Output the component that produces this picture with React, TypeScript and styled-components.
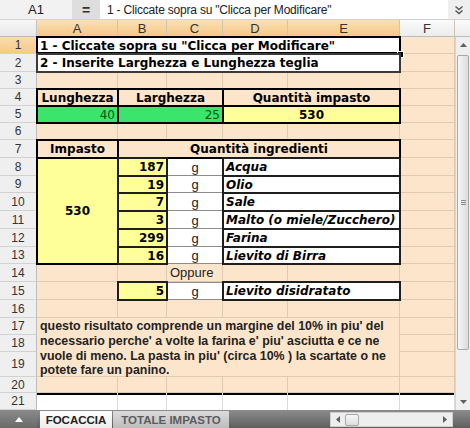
import React from 'react';
import styled, { createGlobalStyle, css } from 'styled-components';

const GlobalStyle = createGlobalStyle`
  html, body { margin: 0; padding: 0; background: #ffffff; overflow: hidden; }
  body { font-family: "Liberation Sans", Arial, sans-serif; }
`;

const PEACH = '#fce5cb';
const GRID = '#decbb4';
const GREEN = '#3be46a';
const YELLOW = '#ffff99';

const COLS = [37, 81, 49, 56, 65, 112, 55, 15];
// index 0 = header row, then sheet rows 1..21
const ROWS = [17, 17, 18, 17, 17, 17, 17, 18, 18, 17, 18, 18, 18, 17, 18, 18, 18, 17, 17, 25, 16, 17];

type Variant =
  | 'plain'
  | 'title'
  | 'subtitle'
  | 'head'
  | 'input'
  | 'result'
  | 'qty'
  | 'unit'
  | 'item'
  | 'note'
  | 'oppure'
  | 'blank';

const boxed = (color = '#000') => css`
  position: relative;
  z-index: 1;
  box-shadow: 0 0 0 1px ${color}, inset 0 0 0 1px ${color};
`;

const gridLines = css`
  border-right: 1px solid ${GRID};
  border-bottom: 1px solid ${GRID};
`;

const variants: Record<Variant, ReturnType<typeof css>> = {
  plain: css`
    background: ${PEACH};
    ${gridLines}
  `,
  title: css`
    background: #fff;
    font-weight: bold;
    ${boxed('#000')}
    box-shadow: 0 0 0 1px #000, inset 0 0 0 1px #000, inset 0 -1px 0 1px #000;
  `,
  subtitle: css`
    background: #fff;
    font-weight: bold;
    ${boxed('#3a3a3a')}
  `,
  head: css`
    background: ${PEACH};
    font-weight: bold;
    justify-content: center;
    ${boxed()}
  `,
  input: css`
    background: ${GREEN};
    justify-content: flex-end;
    color: #0f560f;
    ${boxed()}
  `,
  result: css`
    background: ${YELLOW};
    font-weight: bold;
    justify-content: center;
    ${boxed()}
  `,
  qty: css`
    background: ${YELLOW};
    font-weight: bold;
    justify-content: flex-end;
    ${boxed('#1e1e1e')}
  `,
  unit: css`
    background: #fff;
    justify-content: center;
    font-family: "Liberation Sans", Arial, sans-serif;
    font-size: 13px;
    color: #222;
    box-shadow: inset 0 -1px 0 #8c8c8c;
  `,
  item: css`
    background: #fff;
    font-weight: bold;
    font-style: italic;
    ${boxed('#1e1e1e')}
  `,
  note: css`
    background: ${PEACH};
    ${gridLines}
    font-family: "Liberation Sans", Arial, sans-serif;
    font-weight: bold;
    font-size: 12.4px;
    line-height: 14.8px;
    color: #222;
    align-items: flex-start;
    padding-top: 1px;
  `,
  oppure: css`
    background: ${PEACH};
    ${gridLines}
    font-family: "Liberation Sans", Arial, sans-serif;
    font-size: 13px;
    color: #222;
  `,
  blank: css`
    background: #fff;
    border-right: 1px solid #dadada;
    box-shadow: inset 0 2px 0 #000;
  `,
};

const Frame = styled.div`
  width: 470px;
  height: 428px;
  display: flex;
  flex-direction: column;
  overflow: hidden;
`;

const FormulaBar = styled.div`
  display: flex;
  height: 20px;
  box-sizing: border-box;
  border-bottom: 1px solid #d2d2d2;
  background: #f2f2f2;
`;

const NameBox = styled.div`
  width: 72px;
  display: flex;
  align-items: center;
  justify-content: center;
  font-size: 13px;
  color: #222;
`;

const EqualsButton = styled.div`
  width: 28px;
  display: flex;
  align-items: center;
  justify-content: center;
  background: #dedede;
  font-weight: bold;
  font-size: 14px;
  color: #333;
`;

const FormulaInput = styled.div`
  flex: 1;
  background: #fff;
  display: flex;
  align-items: center;
  padding-left: 7px;
  font-size: 12px;
  letter-spacing: -0.2px;
  color: #222;
  white-space: nowrap;
  overflow: hidden;
`;

const ExpandButton = styled.div`
  width: 22px;
  display: flex;
  align-items: center;
  justify-content: center;
  background: #efefef;
`;

const Sheet = styled.div`
  display: grid;
  grid-template-columns: ${COLS.map((c) => `${c}px`).join(' ')};
  grid-template-rows: ${ROWS.map((r) => `${r}px`).join(' ')};
  height: 390px;
`;

const Corner = styled.div`
  grid-row: 1;
  grid-column: 1;
  background: linear-gradient(#f7f7f7, #e8e8e8);
  border-right: 1px solid #c4c4c4;
  border-bottom: 1px solid #bcbcbc;
  box-sizing: border-box;
`;

const ColHead = styled.div<{ $c: number; $sel?: boolean; $edge?: boolean }>`
  grid-row: 1;
  grid-column: ${(p) => p.$c};
  display: flex;
  align-items: center;
  justify-content: center;
  box-sizing: border-box;
  font-size: 13px;
  color: #333;
  border-right: ${(p) => (p.$edge ? 'none' : '1px solid #d0c4b4')};
  border-bottom: 1px solid #bcbcbc;
  background: ${(p) =>
    p.$sel ? 'linear-gradient(#fbe0b6, #f5c886)' : 'linear-gradient(#fbfbfb, #ececec)'};
`;

const RowHead = styled.div<{ $r: number; $sel?: boolean }>`
  grid-row: ${(p) => p.$r};
  grid-column: 1;
  display: flex;
  align-items: center;
  justify-content: center;
  box-sizing: border-box;
  font-size: 12px;
  color: #333;
  border-right: 1px solid #bcbcbc;
  border-bottom: 1px solid #d2d2d2;
  background: ${(p) => (p.$sel ? 'linear-gradient(#fbdcae, #f6c98a)' : '#efefef')};
`;

const Cell = styled.div<{
  $r: number;
  $c: number;
  $rs?: number;
  $cs?: number;
  $v: Variant;
  $top?: boolean;
}>`
  grid-row: ${(p) => p.$r} / span ${(p) => p.$rs ?? 1};
  grid-column: ${(p) => p.$c} / span ${(p) => p.$cs ?? 1};
  box-sizing: border-box;
  display: flex;
  align-items: center;
  min-width: 0;
  white-space: nowrap;
  padding: 0 3px;
  font-family: "DejaVu Sans", Verdana, sans-serif;
  font-size: 12px;
  color: #000;
  ${(p) => variants[p.$v]}
  ${(p) =>
    p.$top &&
    css`
      box-shadow: inset 0 -1px 0 #8c8c8c, inset 0 1px 0 #8c8c8c;
    `}
`;

const Handle = styled.span`
  position: absolute;
  right: -4px;
  bottom: -4px;
  width: 5px;
  height: 5px;
  background: #000;
  border: 1px solid #fff;
`;

const VScroll = styled.div`
  grid-row: 2 / span 21;
  grid-column: 8;
  display: flex;
  flex-direction: column;
  background: #efefef;
  border-left: 1px solid #d4d4d4;
  box-sizing: border-box;
`;

const ArrowBox = styled.div`
  height: 16px;
  display: flex;
  align-items: center;
  justify-content: center;
`;

const Track = styled.div`
  flex: 1;
  display: flex;
  flex-direction: column;
`;

const VThumb = styled.div`
  margin: 2px 1px 0 1px;
  height: 295px;
  box-sizing: border-box;
  border: 1px solid #a8a8a8;
  border-radius: 2px;
  background: linear-gradient(to right, #f6f6f6, #dcdcdc);
  display: flex;
  align-items: center;
  justify-content: center;
`;

const Grip = styled.div`
  display: flex;
  flex-direction: column;
  gap: 1px;
  & > span {
    display: block;
    width: 5px;
    height: 1px;
    background: #8a8a8a;
  }
`;

const TabBar = styled.div`
  display: flex;
  height: 18px;
  background: linear-gradient(#8c8c8c, #5f5f5f);
`;

const TabNav = styled.div`
  width: 37px;
  display: flex;
  align-items: center;
  justify-content: center;
  background: linear-gradient(#8a8a8a, #6a6a6a);
`;

const Tab = styled.div<{ $active?: boolean; $w: number }>`
  width: ${(p) => p.$w}px;
  margin: 1px 0 0 ${(p) => (p.$active ? 3 : 1)}px;
  display: flex;
  align-items: center;
  justify-content: center;
  font-weight: bold;
  font-size: 11.5px;
  white-space: nowrap;
  color: ${(p) => (p.$active ? '#222' : '#5c5c5c')};
  background: ${(p) =>
    p.$active ? 'linear-gradient(#fdfdfd, #ededed)' : 'linear-gradient(#dcdcdc, #bdbdbd)'};
`;

const Spacer = styled.div`
  flex: 1;
`;

const HScroll = styled.div`
  width: 123px;
  margin: 2px 0 1px;
  background: #eeeeee;
  display: flex;
  align-items: center;
  box-sizing: border-box;
  border: 1px solid #cfcfcf;
`;

const HArrow = styled.div`
  width: 14px;
  display: flex;
  justify-content: center;
`;

const HThumb = styled.div`
  width: 14px;
  height: 12px;
  box-sizing: border-box;
  border: 1px solid #a8a8a8;
  border-radius: 2px;
  background: linear-gradient(#f8f8f8, #dedede);
`;

const CornerBox = styled.div`
  width: 17px;
`;

type Spec = {
  r: number;
  c: number;
  rs?: number;
  cs?: number;
  v: Variant;
  text?: React.ReactNode;
  top?: boolean;
  handle?: boolean;
};

const ingredients: [string, string][] = [
  ['187', 'Acqua'],
  ['19', 'Olio'],
  ['7', 'Sale'],
  ['3', 'Malto (o miele/Zucchero)'],
  ['299', 'Farina'],
  ['16', 'Lievito di Birra'],
];

const specs: Spec[] = [
  { r: 1, c: 1, cs: 5, v: 'title', text: '1 - Cliccate sopra su "Clicca per Modificare"', handle: true },
  { r: 2, c: 1, cs: 5, v: 'subtitle', text: '2 - Inserite Larghezza e Lunghezza teglia' },
  { r: 4, c: 1, v: 'head', text: 'Lunghezza' },
  { r: 4, c: 2, cs: 2, v: 'head', text: 'Larghezza' },
  { r: 4, c: 4, cs: 2, v: 'head', text: 'Quantità impasto' },
  { r: 5, c: 1, v: 'input', text: '40' },
  { r: 5, c: 2, cs: 2, v: 'input', text: '25' },
  { r: 5, c: 4, cs: 2, v: 'result', text: '530' },
  { r: 7, c: 1, v: 'head', text: 'Impasto' },
  { r: 7, c: 2, cs: 4, v: 'head', text: 'Quantità ingredienti' },
  { r: 8, c: 1, rs: 6, v: 'result', text: '530' },
  ...ingredients.flatMap(([q, name], i): Spec[] => [
    { r: 8 + i, c: 2, v: 'qty', text: q },
    { r: 8 + i, c: 3, v: 'unit', text: 'g' },
    { r: 8 + i, c: 4, cs: 2, v: 'item', text: name },
  ]),
  { r: 14, c: 3, v: 'oppure', text: 'Oppure' },
  { r: 15, c: 2, v: 'qty', text: '5' },
  { r: 15, c: 3, v: 'unit', text: 'g', top: true },
  { r: 15, c: 4, cs: 2, v: 'item', text: 'Lievito disidratato' },
  {
    r: 17,
    c: 1,
    rs: 3,
    cs: 5,
    v: 'note',
    text: (
      <span>
        questo risultato comprende un margine del 10% in piu' del
        <br />
        necessario perche' a volte la farina e' piu' asciutta e ce ne
        <br />
        vuole di meno. La pasta in piu' (circa 10% ) la scartate o ne
        <br />
        potete fare un panino.
      </span>
    ),
  },
  ...[1, 2, 3, 4, 5, 6].map((c): Spec => ({ r: 21, c, v: 'blank' })),
];

function buildCells(): Spec[] {
  const taken = new Set<string>();
  specs.forEach((s) => {
    for (let r = s.r; r < s.r + (s.rs ?? 1); r++)
      for (let c = s.c; c < s.c + (s.cs ?? 1); c++) taken.add(`${r}-${c}`);
  });
  const fill: Spec[] = [];
  for (let r = 1; r <= 21; r++)
    for (let c = 1; c <= 6; c++) if (!taken.has(`${r}-${c}`)) fill.push({ r, c, v: 'plain' });
  return [...fill, ...specs];
}

const Tri = ({ dir }: { dir: 'up' | 'down' | 'left' | 'right' }) => {
  const pts = {
    up: '0,4 3.5,0 7,4',
    down: '0,0 3.5,4 7,0',
    left: '4,0 0,3.5 4,7',
    right: '0,0 4,3.5 0,7',
  }[dir];
  const w = dir === 'up' || dir === 'down' ? 7 : 4;
  const h = dir === 'up' || dir === 'down' ? 4 : 7;
  return (
    <svg width={w} height={h} viewBox={`0 0 ${w} ${h}`}>
      <polygon points={pts} fill="#606060" />
    </svg>
  );
};

export default function App() {
  const cells = buildCells();
  const rowNums = Array.from({ length: 21 }, (_, i) => i + 1);
  return (
    <>
      <GlobalStyle />
      <Frame>
        <FormulaBar>
          <NameBox>A1</NameBox>
          <EqualsButton>=</EqualsButton>
          <FormulaInput>1 - Cliccate sopra su "Clicca per Modificare"</FormulaInput>
          <ExpandButton>
            <svg width="10" height="10" viewBox="0 0 10 10">
              <polyline points="1.5,1.5 5,4.5 8.5,1.5" fill="none" stroke="#555" strokeWidth="1.4" />
              <polyline points="1.5,5.5 5,8.5 8.5,5.5" fill="none" stroke="#555" strokeWidth="1.4" />
            </svg>
          </ExpandButton>
        </FormulaBar>
        <Sheet>
          <Corner />
          {['A', 'B', 'C', 'D', 'E', 'F'].map((l, i) => (
            <ColHead key={l} $c={i + 2} $sel={i < 5}>
              {l}
            </ColHead>
          ))}
          <ColHead $c={8} $edge />
          {rowNums.map((n) => (
            <RowHead key={n} $r={n + 1} $sel={n === 1}>
              {n}
            </RowHead>
          ))}
          {cells.map((s) => (
            <Cell
              key={`${s.r}-${s.c}`}
              $r={s.r + 1}
              $c={s.c + 1}
              $rs={s.rs}
              $cs={s.cs}
              $v={s.v}
              $top={s.top}
            >
              {s.text}
              {s.handle && <Handle />}
            </Cell>
          ))}
          <VScroll>
            <ArrowBox>
              <Tri dir="up" />
            </ArrowBox>
            <Track>
              <VThumb>
                <Grip>
                  <span />
                  <span />
                  <span />
                </Grip>
              </VThumb>
            </Track>
            <ArrowBox>
              <Tri dir="down" />
            </ArrowBox>
          </VScroll>
        </Sheet>
        <TabBar>
          <TabNav>
            <svg width="8" height="5" viewBox="0 0 8 5">
              <polygon points="0,5 4,0 8,5" fill="#ffffff" />
            </svg>
          </TabNav>
          <Tab $active $w={72}>
            FOCACCIA
          </Tab>
          <Tab $w={116}>TOTALE IMPASTO</Tab>
          <Spacer />
          <HScroll>
            <HArrow>
              <Tri dir="left" />
            </HArrow>
            <HThumb />
            <Spacer />
            <HArrow>
              <Tri dir="right" />
            </HArrow>
          </HScroll>
          <CornerBox />
        </TabBar>
      </Frame>
    </>
  );
}
